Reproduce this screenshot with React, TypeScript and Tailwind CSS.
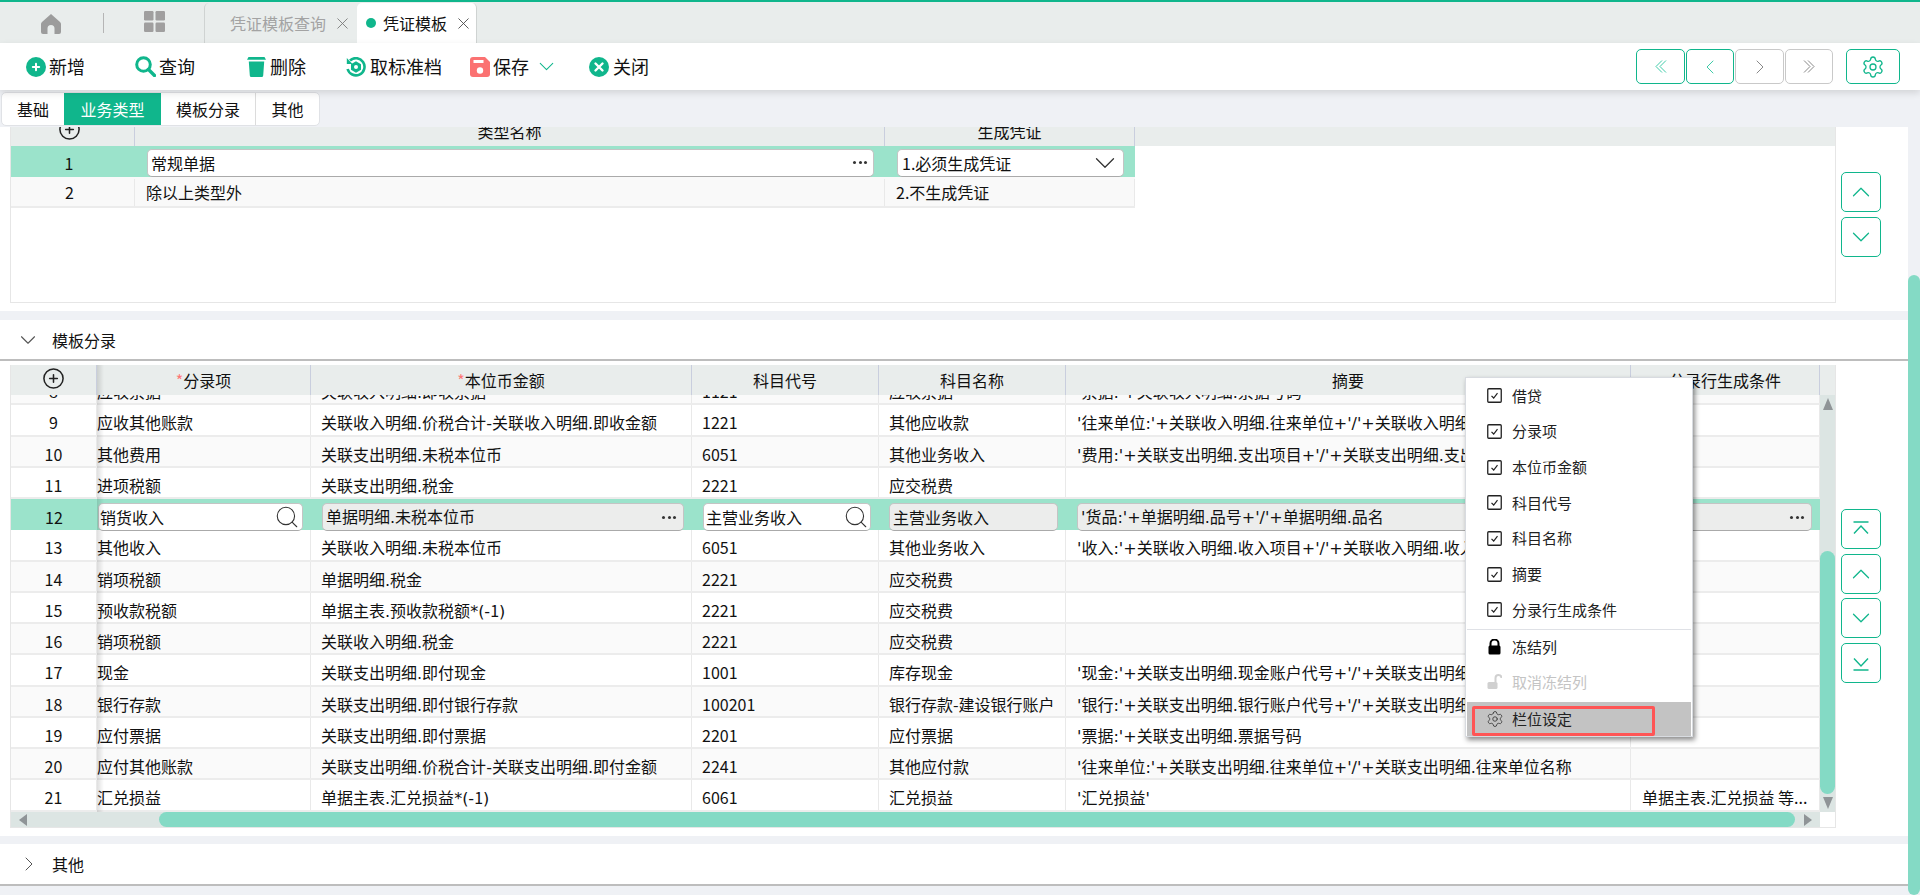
import React from "react";
import { X, ChevronDown, ChevronRight, ChevronLeft, ChevronUp, Settings, Search, CirclePlus } from "lucide-react";

const TEAL = "#10b68c";

const HomeIcon = () => (
  <svg width="20" height="20" viewBox="0 0 20 20" fill="#9c9c9c">
    <path d="M10 0 L19 8 Q20 9 20 10 V18 Q20 20 18 20 H13.5 V14.5 A3.5 3.5 0 0 0 6.5 14.5 V20 H2 Q0 20 0 18 V10 Q0 9 1 8 Z" />
  </svg>
);
const GridIcon = () => (
  <svg width="21" height="21" viewBox="0 0 21 21" fill="#a09f9f">
    <rect x="0" y="0" width="9.5" height="9.5" rx="1.2" />
    <rect x="11.5" y="0" width="9.5" height="9.5" rx="1.2" />
    <rect x="0" y="11.5" width="9.5" height="9.5" rx="1.2" />
    <rect x="11.5" y="11.5" width="9.5" height="9.5" rx="1.2" />
  </svg>
);
const AddIcon = () => (
  <svg width="20" height="20" viewBox="0 0 20 20">
    <circle cx="10" cy="10" r="10" fill={TEAL} />
    <path d="M10 6.8 V13.2 M6.8 10 H13.2" stroke="#fff" strokeWidth="2" strokeLinecap="round" />
  </svg>
);
const FindIcon = () => (
  <svg width="21" height="21" viewBox="0 0 21 21" fill="none" stroke={TEAL}>
    <circle cx="8.5" cy="8.5" r="6.8" strokeWidth="3" />
    <path d="M13.5 13.5 L19.5 19.5" strokeWidth="3.4" strokeLinecap="round" />
  </svg>
);
const CloseIcon = () => (
  <svg width="20" height="20" viewBox="0 0 20 20">
    <circle cx="10" cy="10" r="10" fill={TEAL} />
    <path d="M6.5 6.5 L13.5 13.5 M13.5 6.5 L6.5 13.5" stroke="#fff" strokeWidth="2.4" strokeLinecap="round" />
  </svg>
);
const TrashIcon = () => (
  <svg width="19" height="20" viewBox="0 0 19 20" fill={TEAL}>
    <path d="M1.5 0 H17.5 L19 2.8 H0 Z" />
    <path d="M1.8 4.5 H17.2 L16.2 18.5 Q16.1 20 14.7 20 H4.3 Q2.9 20 2.8 18.5 Z" />
  </svg>
);
const UnarchiveIcon = () => (
  <svg width="20" height="20" viewBox="0 0 20 20" fill="none" stroke={TEAL}>
    <path d="M4 3.5 A8.6 8.6 0 1 1 1.6 12" strokeWidth="2.6" />
    <path d="M0.8 1 V7 H6.5 Z" fill={TEAL} stroke="none" />
    <path d="M10 5.2 L14.2 7.6 V12.4 L10 14.8 L5.8 12.4 V7.6 Z" strokeWidth="1.6" fill={TEAL} />
    <circle cx="10" cy="10" r="2" fill="#fff" stroke="none" />
  </svg>
);
const SaveIcon = () => (
  <svg width="20" height="20" viewBox="0 0 20 20">
    <path d="M3 0 H15 L20 5 V17 Q20 20 17 20 H3 Q0 20 0 17 V3 Q0 0 3 0 Z" fill="#fb7272" />
    <rect x="3.5" y="3" width="10" height="3" fill="#fff" />
    <circle cx="10" cy="13.5" r="3.2" fill="#fff" />
  </svg>
);
const Dots = () => (
  <span className="flex gap-[2.5px]">
    <i className="block h-[3px] w-[3px] rounded-full bg-[#333]" />
    <i className="block h-[3px] w-[3px] rounded-full bg-[#333]" />
    <i className="block h-[3px] w-[3px] rounded-full bg-[#333]" />
  </span>
);
const Tri = ({ d }: { d: string }) => (
  <svg width="12" height="12" viewBox="0 0 12 12" fill="#8f9497">
    <path d={d} />
  </svg>
);
const TopBar = ({ up }: { up: boolean }) => (
  <svg width="18" height="18" viewBox="0 0 18 18" fill="none" stroke={TEAL} strokeWidth="1.4">
    {up ? <path d="M1.5 2 H16.5 M2 13.5 L9 6 L16 13.5" /> : <path d="M1.5 16 H16.5 M2 4.5 L9 12 L16 4.5" />}
  </svg>
);
const DoubleChevron = ({ left, color }: { left: boolean; color: string }) => (
  <svg width="12" height="13" viewBox="0 0 12 13" fill="none" stroke={color} strokeWidth="1">
    {left ? <path d="M7 0.5 L1 6.5 L7 12.5 M11 0.5 L5 6.5 L11 12.5" /> : <path d="M5 0.5 L11 6.5 L5 12.5 M1 0.5 L7 6.5 L1 12.5" />}
  </svg>
);

const Check = () => (
  <svg width="15" height="15" viewBox="0 0 15 15" fill="none">
    <rect x="0.75" y="0.75" width="13.5" height="13.5" rx="1" stroke="#222" strokeWidth="1.3" />
    <path d="M4.5 7.8 L6.7 10 L10.5 5.2" stroke="#222" strokeWidth="1.2" />
  </svg>
);

const SmallBtn = ({ children, on = true, cls }: { children: React.ReactNode; on?: boolean; cls: string }) => (
  <div className={`flex items-center justify-center rounded-[5px] border ${on ? "border-[#10b68c]" : "border-[#c9c9c9]"} ${cls}`}>{children}</div>
);

/* ASCII punctuation in the formulas is wider in the reference than in the CJK face. */
const Formula = ({ text }: { text: string }) => (
  <>
    {text.split(/([':+\/.\-*()]+)/).map((part, i) =>
      i % 2 === 1 ? (
        <span key={i} className="font-['DejaVu_Sans']">{part}</span>
      ) : (
        <span key={i}>{part}</span>
      )
    )}
  </>
);

const cols = "grid grid-cols-[86px_214px_381px_187px_187px_565px_189px]";
const heads = ["分录项", "本位币金额", "科目代号", "科目名称", "摘要", "分录行生成条件"];
type Row = [string, string, string, string, string, string, string];
const rows: Row[] = [
  ["8", "应收票据", "关联收入明细.即收票据", "1121", "应收票据", "'票据:'+关联收入明细.票据号码", ""],
  ["9", "应收其他账款", "关联收入明细.价税合计-关联收入明细.即收金额", "1221", "其他应收款", "'往来单位:'+关联收入明细.往来单位+'/'+关联收入明细.往来单位名称", ""],
  ["10", "其他费用", "关联支出明细.未税本位币", "6051", "其他业务收入", "'费用:'+关联支出明细.支出项目+'/'+关联支出明细.支出项目名称", ""],
  ["11", "进项税额", "关联支出明细.税金", "2221", "应交税费", "", ""],
  ["12", "销货收入", "单据明细.未税本位币", "主营业务收入", "主营业务收入", "'货品:'+单据明细.品号+'/'+单据明细.品名", ""],
  ["13", "其他收入", "关联收入明细.未税本位币", "6051", "其他业务收入", "'收入:'+关联收入明细.收入项目+'/'+关联收入明细.收入项目名称", ""],
  ["14", "销项税额", "单据明细.税金", "2221", "应交税费", "", ""],
  ["15", "预收款税额", "单据主表.预收款税额*(-1)", "2221", "应交税费", "", ""],
  ["16", "销项税额", "关联收入明细.税金", "2221", "应交税费", "", ""],
  ["17", "现金", "关联支出明细.即付现金", "1001", "库存现金", "'现金:'+关联支出明细.现金账户代号+'/'+关联支出明细.现金账户名称", ""],
  ["18", "银行存款", "关联支出明细.即付银行存款", "100201", "银行存款-建设银行账户", "'银行:'+关联支出明细.银行账户代号+'/'+关联支出明细.银行账户名称", ""],
  ["19", "应付票据", "关联支出明细.即付票据", "2201", "应付票据", "'票据:'+关联支出明细.票据号码", ""],
  ["20", "应付其他账款", "关联支出明细.价税合计-关联支出明细.即付金额", "2241", "其他应付款", "'往来单位:'+关联支出明细.往来单位+'/'+关联支出明细.往来单位名称", ""],
  ["21", "汇兑损益", "单据主表.汇兑损益*(-1)", "6061", "汇兑损益", "'汇兑损益'", "单据主表.汇兑损益 等..."],
];

const Cell = ({ children, cls = "pl-[10px]" }: { children?: React.ReactNode; cls?: string }) => (
  <div className={`overflow-hidden whitespace-nowrap border-r border-[#e9e9e9] pt-[5px] leading-[24px] ${cls}`}>{children}</div>
);

const inputBase = "flex h-[28px] items-center rounded-[5px] border border-[#c4c4c4] border-b-[#aaa] leading-[26px] whitespace-nowrap overflow-hidden";

const menuItems = ["借贷", "分录项", "本位币金额", "科目代号", "科目名称", "摘要", "分录行生成条件"];

export default function App() {
  return (
    <div
      className="relative h-[895px] w-[1920px] overflow-hidden bg-[#eff1f5] text-[16px] text-[#111]"
      style={{ fontFamily: '"Noto Sans CJK SC", "Noto Sans", sans-serif' }}
    >
      {/* tab bar */}
      <div className="flex h-[43px] items-end border-t-2 border-[#10b68c] bg-[#e9edec] pl-[41px]">
        <div className="mb-[9px]"><HomeIcon /></div>
        <div className="mb-[10px] ml-[42px] h-[20px] w-px bg-[#b5b5b5]" />
        <div className="mb-[11px] ml-[40px]"><GridIcon /></div>
        <div className="ml-[39px] flex h-[40px] w-[153px] items-center rounded-t-[5px] border-l border-[#cfd3d2] pl-[25px] text-[#a3a3a3]">
          <span>凭证模板查询</span>
          <X size={19} strokeWidth={1.1} className="ml-[7px] text-[#777]" />
        </div>
        <div className="flex h-[40px] w-[120px] items-center rounded-t-[5px] border-r border-[#cfd3d2] bg-white pl-[9px]">
          <span className="h-[10px] w-[10px] rounded-full bg-[#10b68c]" />
          <span className="ml-[7px]">凭证模板</span>
          <X size={19} strokeWidth={1.1} className="ml-[7px] text-[#444]" />
        </div>
      </div>

      {/* toolbar */}
      <div className="relative z-10 flex h-[47px] items-center bg-white pl-[26px] text-[18px] shadow-[0_3px_7px_rgba(0,0,0,0.12)]">
        <AddIcon /><span className="ml-[3px]">新增</span>
        <div className="ml-[50px]"><FindIcon /></div><span className="ml-[3px]">查询</span>
        <div className="ml-[52px]"><TrashIcon /></div><span className="ml-[4px]">删除</span>
        <div className="ml-[40px]"><UnarchiveIcon /></div><span className="ml-[4px]">取标准档</span>
        <div className="ml-[28px]"><SaveIcon /></div><span className="ml-[3px]">保存</span>
        <ChevronDown size={25} strokeWidth={1} className="ml-[5px] text-[#10b68c]" />
        <div className="ml-[30px]"><CloseIcon /></div><span className="ml-[4px]">关闭</span>
        <div className="ml-auto mr-[20px] flex items-center">
          <SmallBtn cls="h-[35px] w-[49px]"><DoubleChevron left color="#3fcba8" /></SmallBtn>
          <SmallBtn cls="ml-[1px] h-[35px] w-[48px]"><ChevronLeft size={24} strokeWidth={1} className="text-[#3fcba8]" /></SmallBtn>
          <SmallBtn on={false} cls="ml-[1px] h-[35px] w-[49px]"><ChevronRight size={24} strokeWidth={1} className="text-[#888]" /></SmallBtn>
          <SmallBtn on={false} cls="ml-[1px] h-[35px] w-[48px]"><DoubleChevron left={false} color="#888" /></SmallBtn>
          <SmallBtn cls="ml-[13px] h-[35px] w-[54px]"><Settings size={24} strokeWidth={1.3} className="text-[#10b68c]" /></SmallBtn>
        </div>
      </div>

      <div className="flex h-[805px]">
        <div className="w-[1908px]">
          {/* sub tabs */}
          <div className="flex h-[37px] pl-[1px] pt-[2px]">
            <div className="flex h-[34px] overflow-hidden rounded-[5px] border border-[#e0e2e6] bg-white leading-[32px]">
              <div className="w-[62px] text-center">基础</div>
              <div className="w-[97px] bg-[#10b68c] text-center text-white">业务类型</div>
              <div className="w-[95px] border-r border-[#dcdcdc] text-center">模板分录</div>
              <div className="w-[63px] text-center">其他</div>
            </div>
          </div>

          {/* top panel */}
          <div className="flex h-[184px] bg-white pl-[10px]">
            <div className="flex h-[176px] w-[1826px] flex-col border-x border-b border-[#e6e6e6]">
              <div className="flex h-[19px] overflow-hidden bg-[#e9edec]">
                <div className="flex w-[124px] justify-center border-r border-[#c9cede] pr-[6px]">
                  <CirclePlus size={23} strokeWidth={1.6} className="mt-[-9px] shrink-0 text-[#222]" />
                </div>
                <div className="w-[750px] border-r border-[#c9cede] text-center leading-[24px]"><div className="mt-[-8px]">类型名称</div></div>
                <div className="w-[250px] border-r border-[#c9cede] text-center leading-[24px]"><div className="mt-[-8px]">生成凭证</div></div>
              </div>
              <div className="flex h-[31px] w-[1124px] items-center bg-[#9be3cb] pt-[2px]">
                <div className="w-[118px] pr-[2px] text-center">1</div>
                <div className={`${inputBase} ml-[18px] w-[727px] justify-between bg-white pl-[3px] pr-[6px]`}>
                  <span>常规单据</span><Dots />
                </div>
                <div className={`${inputBase} ml-[23px] w-[227px] justify-between bg-white pl-[4px] pr-[1px]`}>
                  <span>1.必须生成凭证</span>
                  <ChevronDown size={34} strokeWidth={0.9} className="text-[#333]" />
                </div>
              </div>
              <div className="flex h-[31px] w-[1124px] border-b-2 border-[#ececec] bg-[#f9f9f9] pt-[2px] leading-[26px]">
                <div className="w-[124px] border-r border-[#e9e9e9] pr-[6px] text-center">2</div>
                <div className="w-[750px] border-r border-[#e9e9e9] pl-[11px]">除以上类型外</div>
                <div className="w-[250px] border-r border-[#e9e9e9] pl-[11px]">2.不生成凭证</div>
              </div>
            </div>
            <div className="ml-[5px] flex flex-col gap-[5px] pt-[45px]">
              <SmallBtn cls="h-[40px] w-[40px]"><ChevronUp size={30} strokeWidth={1} className="text-[#10b68c]" /></SmallBtn>
              <SmallBtn cls="h-[40px] w-[40px]"><ChevronDown size={30} strokeWidth={1} className="text-[#10b68c]" /></SmallBtn>
            </div>
          </div>

          <div className="mt-[9px] flex h-[41px] items-center border-b-2 border-[#bdbdbd] bg-white pl-[15px]">
            <ChevronDown size={26} strokeWidth={1} className="text-[#555]" />
            <span className="ml-[11px]">模板分录</span>
          </div>

          {/* main grid panel */}
          <div className="flex h-[475px] bg-white pl-[10px] pt-[4px]">
            <div className="relative h-[463px] w-[1826px] overflow-hidden border-x border-b border-[#e6e6e6]">
              <div className={`${cols} h-[30px] bg-[#e9edec] text-center leading-[30px]`}>
                <div className="flex items-center justify-center border-r border-[#c9cede]">
                  <CirclePlus size={23} strokeWidth={1.6} className="mb-[4px] text-[#222]" />
                </div>
                {heads.map((h, i) => (
                  <div key={h} className="border-r border-[#c9cede]">
                    {i < 2 && <span className="text-[#f77]">*</span>}
                    {h}
                  </div>
                ))}
              </div>

              <div className="flex h-[417px]">
                <div className="h-[417px] w-[1809px] overflow-hidden">
                  <div className="mt-[-21px]">
                    {rows.map((r, i) =>
                      r[0] === "12" ? (
                        <div key={r[0]} className={`${cols} h-[31.25px] items-center bg-[#9be3cb] pt-[4px] leading-[26px]`}>
                          <div className="text-center">{r[0]}</div>
                          <div className={`${inputBase} ml-[1px] w-[205px] justify-between bg-white pl-[1px] pr-[2px]`}>
                            <span>{r[1]}</span>
                            <Search size={26} strokeWidth={1} className="text-[#333]" />
                          </div>
                          <div className={`${inputBase} ml-[11px] w-[362px] justify-between bg-[#ecedec] pl-[3px] pr-[7px]`}>
                            <span><Formula text={r[2]} /></span><Dots />
                          </div>
                          <div className={`${inputBase} ml-[11px] w-[168px] justify-between bg-white pl-[2px] pr-[1px]`}>
                            <span>{r[3]}</span>
                            <Search size={26} strokeWidth={1} className="text-[#333]" />
                          </div>
                          <div className={`${inputBase} ml-[10px] w-[169px] bg-[#ecedec] pl-[3px]`}>
                            <span>{r[4]}</span>
                          </div>
                          <div className={`${inputBase} ml-[11px] w-[541px] bg-[#ecedec] pl-[3px]`}>
                            <span><Formula text={r[5]} /></span>
                          </div>
                          <div className={`${inputBase} ml-[7px] w-[174px] justify-end bg-[#ecedec] pr-[7px]`}>
                            <Dots />
                          </div>
                        </div>
                      ) : (
                        <div
                          key={r[0]}
                          className={`${cols} h-[31.25px] border-b-2 border-[#ececec] ${i % 2 === 1 ? "bg-white" : "bg-[#fafafa]"}`}
                        >
                          <Cell cls="text-center">{r[0]}</Cell>
                          <Cell cls="pl-0">{r[1]}</Cell>
                          <Cell><Formula text={r[2]} /></Cell>
                          <Cell>{r[3]}</Cell>
                          <Cell>{r[4]}</Cell>
                          <Cell cls="pl-[11px]"><Formula text={r[5]} /></Cell>
                          <Cell cls="pl-[11px]">{r[6]}</Cell>
                        </div>
                      )
                    )}
                  </div>
                </div>
                {/* vertical scrollbar */}
                <div className="flex h-[417px] w-[15px] flex-col items-center bg-[#dce5e3]">
                  <div className="mt-[3px] h-[12px]"><Tri d="M6 0 L11 12 H1 Z" /></div>
                  <div className="mt-[141px] h-[243px] w-[15px] rounded-full bg-[#84dac5]" />
                  <div className="mt-[3px] h-[12px]"><Tri d="M6 12 L11 0 H1 Z" /></div>
                </div>
              </div>

              {/* horizontal scrollbar */}
              <div className="flex h-[15px] w-[1809px] items-center bg-[#dce5e3] pl-[8px]">
                <Tri d="M0 6 L8 0 V12 Z" />
                <div className="ml-[128px] h-[15px] w-[1636px] rounded-full bg-[#84dac5]" />
                <div className="ml-[9px]"><Tri d="M8 6 L0 0 V12 Z" /></div>
              </div>

              <div className="absolute bottom-[15px] left-[86px] top-0 w-[7px] bg-gradient-to-r from-[#00000020] to-transparent" />
            </div>
            <div className="ml-[5px] flex flex-col pt-[144px]">
              <SmallBtn cls="h-[40px] w-[40px]"><TopBar up /></SmallBtn>
              <SmallBtn cls="mt-[5px] h-[40px] w-[40px]"><ChevronUp size={30} strokeWidth={1} className="text-[#10b68c]" /></SmallBtn>
              <SmallBtn cls="mt-[4px] h-[40px] w-[40px]"><ChevronDown size={30} strokeWidth={1} className="text-[#10b68c]" /></SmallBtn>
              <SmallBtn cls="mt-[5px] h-[40px] w-[40px]"><TopBar up={false} /></SmallBtn>
            </div>
          </div>

          <div className="mt-[8px] flex h-[42px] items-center border-b-2 border-[#bdbdbd] bg-white pl-[17px]">
            <ChevronRight size={24} strokeWidth={1} className="text-[#555]" />
            <span className="ml-[11px]">其他</span>
          </div>
        </div>

        {/* page scrollbar */}
        <div className="h-[805px] w-[12px] pt-[185px]">
          <div className="h-[620px] w-[12px] rounded-full bg-[#84dac5]" />
        </div>
      </div>

      {/* context menu */}
      <div className="absolute left-[1465px] top-[377px] z-20 h-[360px] w-[228px] border border-[#d8dbe0] bg-white text-[15px] text-[#222] shadow-[2px_3px_5px_rgba(0,0,0,0.45)]">
        {menuItems.map((m) => (
          <div key={m} className="flex h-[35.7px] items-center pl-[21px]">
            <Check /><span className="ml-[10px]">{m}</span>
          </div>
        ))}
        <div className="mx-[1px] mt-[1px] h-px bg-[#dfe1e6]" />
        <div className="flex h-[35px] items-center pl-[21px]">
          <svg width="15" height="16" viewBox="0 0 15 16"><path d="M3.5 7 V4.5 a4 4 0 0 1 8 0 V7" fill="none" stroke="#000" strokeWidth="2" /><rect x="1.5" y="6.5" width="12" height="9" rx="1.5" fill="#000" /></svg>
          <span className="ml-[10px]">冻结列</span>
        </div>
        <div className="flex h-[35px] items-center pl-[21px] text-[#c4c4c4]">
          <svg width="15" height="16" viewBox="0 0 15 16"><path d="M8.5 8 V4 a3 3 0 0 1 6 0" fill="none" stroke="#d0d0d0" strokeWidth="2" /><rect x="0.5" y="8" width="10" height="7" rx="1.5" fill="#d0d0d0" /></svg>
          <span className="ml-[10px]">取消冻结列</span>
        </div>
        <div className="mx-[1px] mt-[2px] flex h-[34px] items-center bg-[#c3c3c3] pl-[19px]">
          <Settings size={18} strokeWidth={1.1} className="text-[#333]" />
          <span className="ml-[8px]">栏位设定</span>
        </div>
      </div>
      {/* annotation */}
      <div className="absolute left-[1472px] top-[706px] z-30 h-[30px] w-[183px] rounded-[2px] border-[3px] border-[#ff5555]" />
    </div>
  );
}
